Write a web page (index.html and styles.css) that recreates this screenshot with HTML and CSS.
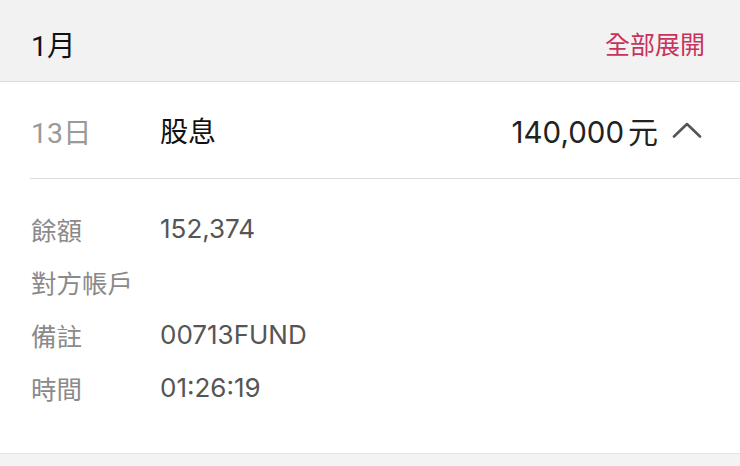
FILE: index.html
```html
<!DOCTYPE html>
<html lang="zh-Hant">
<head>
<meta charset="utf-8">
<link rel="stylesheet" href="styles.css">
</head>
<body>
<div class="month-bar">
  <span class="month">1月</span>
  <span class="expand-all">全部展開</span>
</div>
<div class="entry">
  <div class="entry-head">
    <span class="day">13日</span>
    <span class="kind">股息</span>
    <span class="amount">140,000<span class="unit">元</span></span>
    <svg class="chevron" width="30" height="16" viewBox="0 0 30 16"><path d="M2 14.5 L15 2 L28 14.5" fill="none" stroke="#555" stroke-width="2.6" stroke-linecap="round" stroke-linejoin="round"/></svg>
  </div>
  <div class="details">
    <div class="detail"><span class="label">餘額</span><span class="value">152,374</span></div>
    <div class="detail"><span class="label">對方帳戶</span><span class="value"></span></div>
    <div class="detail"><span class="label">備註</span><span class="value">00713FUND</span></div>
    <div class="detail"><span class="label">時間</span><span class="value">01:26:19</span></div>
  </div>
</div>
<div class="next-bar"></div>
</body>
</html>
```
FILE: styles.css
```css
* { box-sizing: border-box; }
html, body { margin: 0; padding: 0; background: #fff; }
body {
  font-family: Inter, "Noto Sans CJK TC", sans-serif;
  width: 740px;
  height: 466px;
  overflow: hidden;
}
.month-bar {
  height: 82px;
  background: #f2f2f2;
  border-bottom: 1px solid #dcdcdc;
  display: flex;
  align-items: center;
  justify-content: space-between;
  padding: 5px 35px 0 31px;
}
.month { font-size: 28.5px; color: #111; font-family: Roboto, "Noto Sans CJK TC", sans-serif; }
.expand-all { font-size: 25px; color: #c8325c; font-family: "Noto Sans CJK TC", sans-serif; }
.entry-head {
  height: 97px;
  margin-left: 30px;
  border-bottom: 1.5px solid #dedede;
  display: flex;
  align-items: center;
  padding-right: 38px;
}
.day { font-size: 28.5px; color: #9a9a9a; width: 130px; padding-left: 1px; font-family: Roboto, "Noto Sans CJK TC", sans-serif; }
.kind { font-size: 28px; color: #111; flex: 1; }
.amount { font-size: 29.5px; color: #222; }
.unit { margin-left: 4px; font-size: 30px; }
.chevron { margin-left: 14px; margin-top: 0; }
.details { padding: 23px 0 39px 31px; }
.detail { display: flex; height: 53px; align-items: center; }
.label { width: 129px; color: #8a8a8a; font-size: 25.5px; }
.value { color: #555; font-size: 26px; }
.next-bar {
  height: 20px;
  background: #f3f3f3;
  border-top: 1px solid #e4e4e4;
}
```
